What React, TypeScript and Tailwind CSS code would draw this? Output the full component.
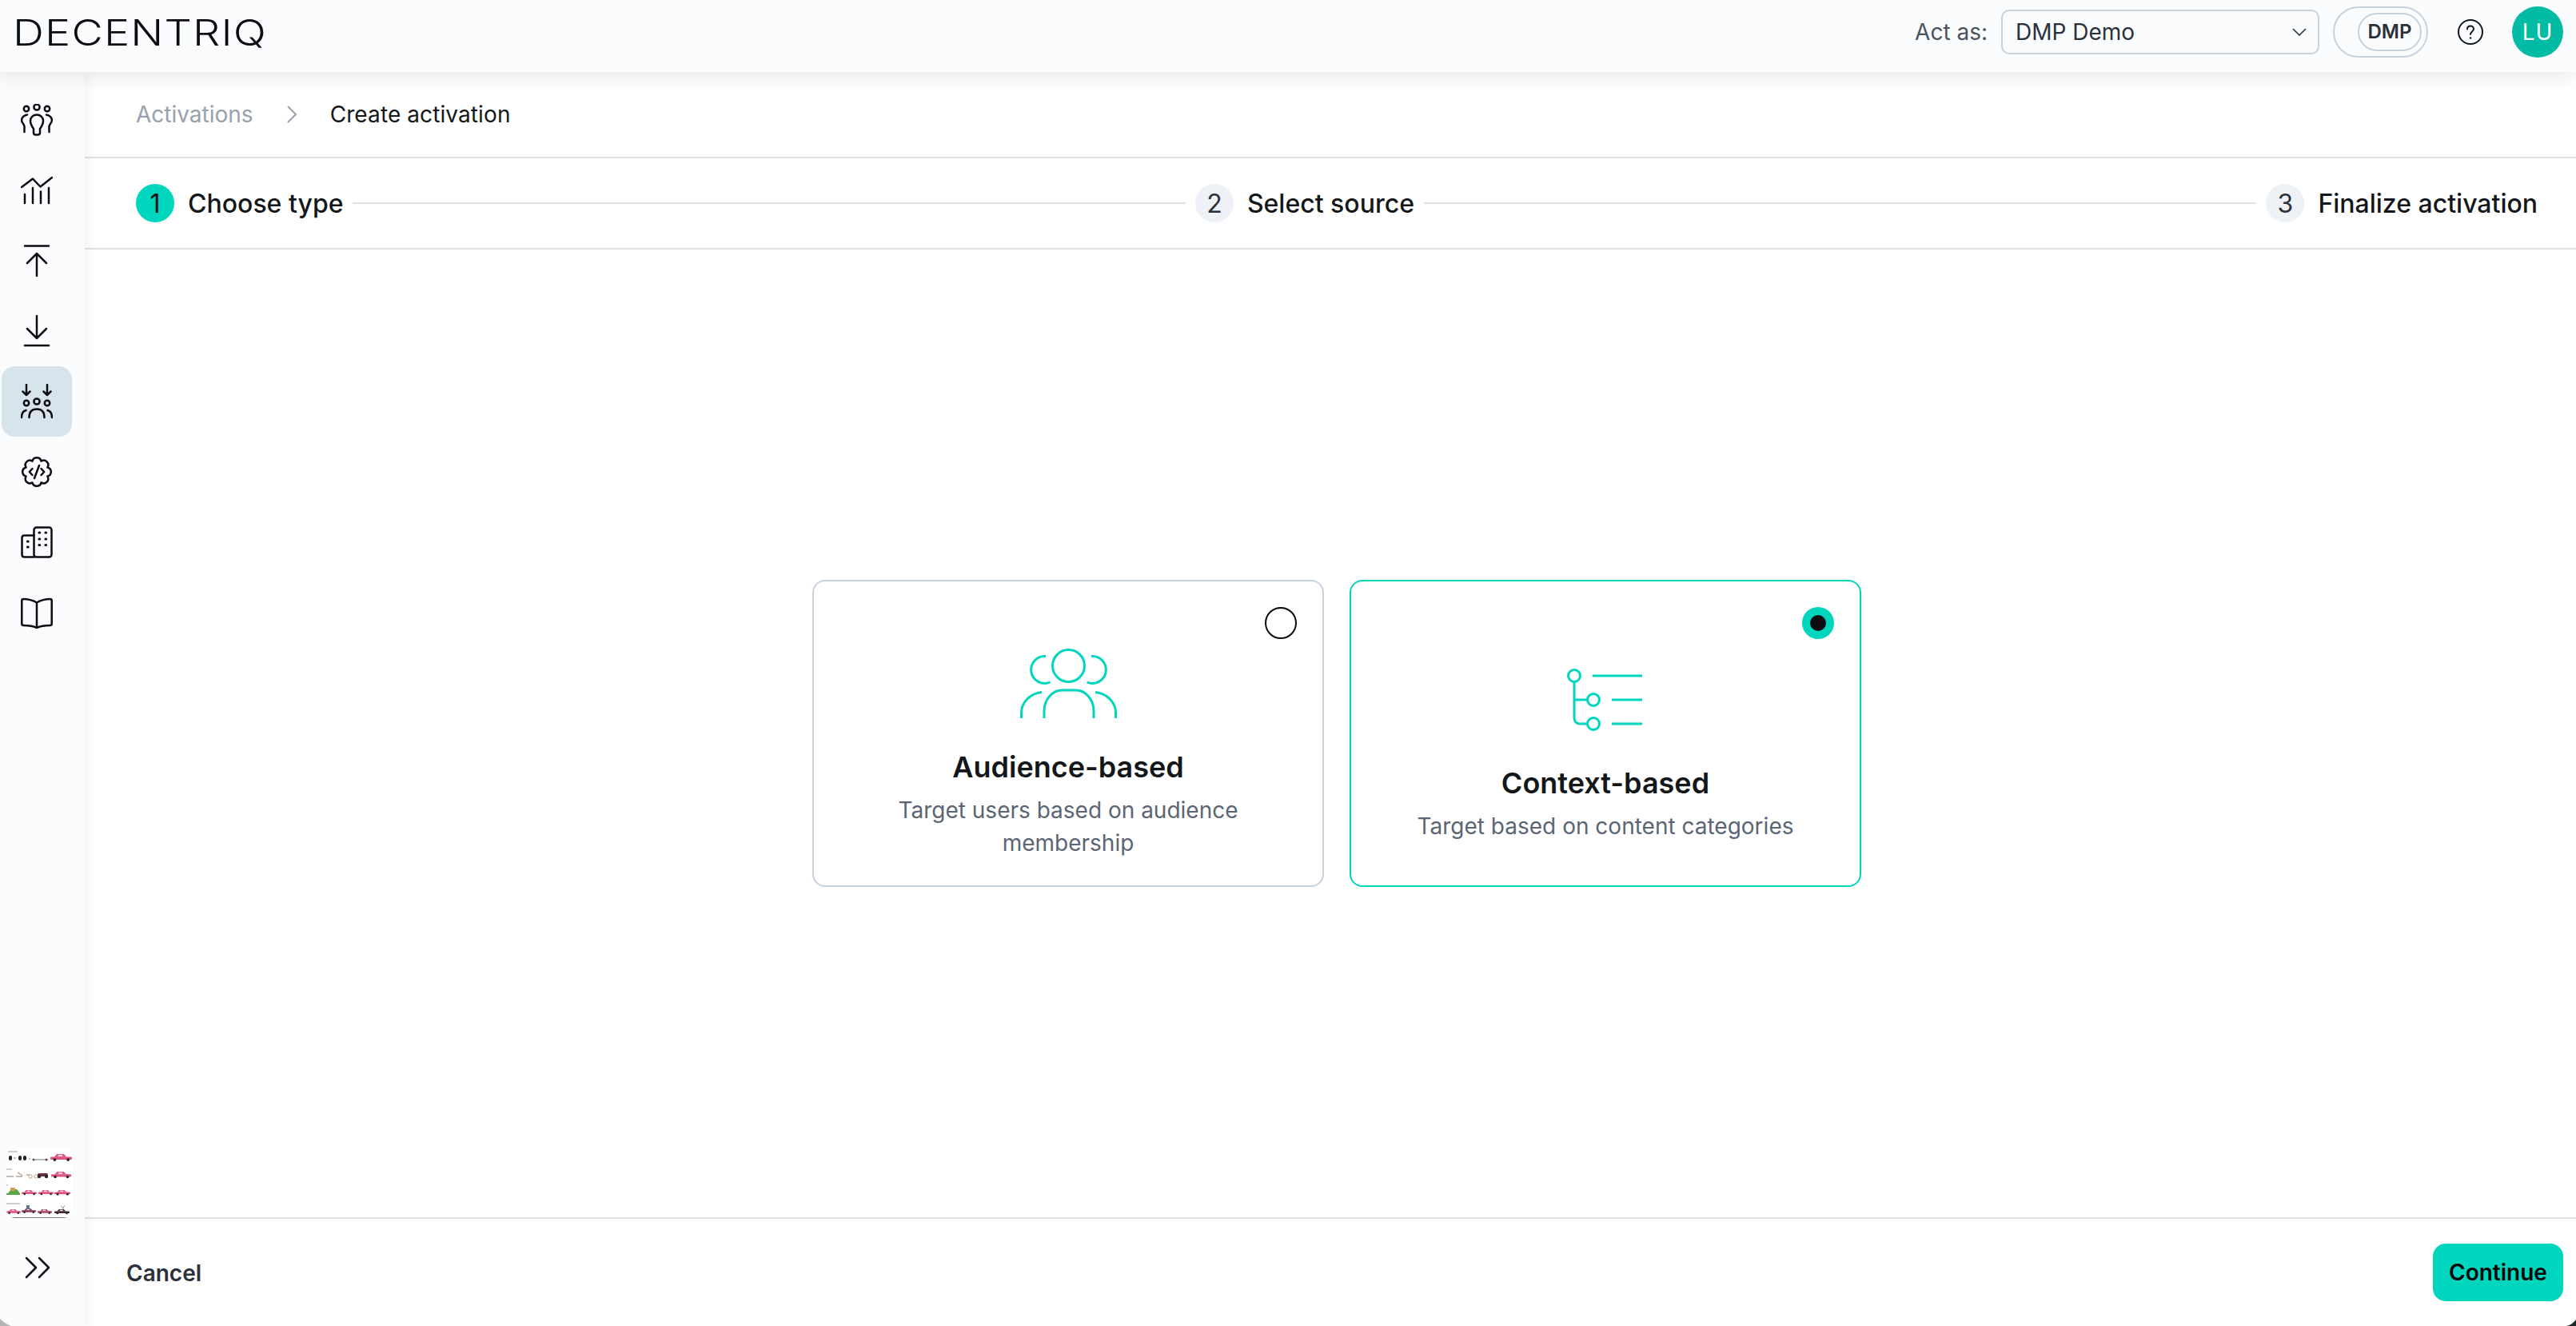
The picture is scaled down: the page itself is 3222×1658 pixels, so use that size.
const teal = '#00d6bd';

function Icon({ children, h = 40 }: { children: React.ReactNode; h?: number }) {
  return (
    <svg width="40" height={h} viewBox={`0 0 40 ${h}`} fill="none" stroke="#0b0d10" strokeWidth="2.5" strokeLinecap="round" strokeLinejoin="round">
      {children}
    </svg>
  );
}

const navIcons = [
  <Icon key="users">
    <circle cx="7" cy="6" r="3.2" />
    <circle cx="20" cy="4" r="3.6" />
    <circle cx="33" cy="6" r="3.2" />
    <path d="M16 31C13 27 12 24 12 21C12 16.5 15.5 13.5 20 13.5C24.5 13.5 28 16.5 28 21C28 24 27 27 24 31V36C24 37.5 23 38.5 21.5 38.5H18.5C17 38.5 16 37.5 16 36Z" />
    <path d="M8 13.5C4 14 1 17 1 20.5C1 23 4 25 4.5 28V35" />
    <path d="M32 13.5C36 14 39 17 39 20.5C39 23 36 25 35.5 28V35" />
  </Icon>,
  <Icon key="chart">
    <path d="M1 16L15 5.500L24.500 15.500L39 4" />
    <path d="M5 25V36M15 17V36M25 21.500V36M35 17V36" />
  </Icon>,
  <Icon key="upload">
    <path d="M5 1.500H35M20 11V39M8 23L20 11L32 23" />
  </Icon>,
  <Icon key="download">
    <path d="M20 1V29M8 17L20 29L32 17M5 38H35" />
  </Icon>,
  <Icon key="audiences" h={44}>
    <path d="M7 1V14M2.500 9.500L7 14L11.500 9.500M33 1V14M28.500 9.500L33 14L37.500 9.500" />
    <circle cx="7" cy="24" r="3.200" />
    <circle cx="20" cy="22" r="3.600" />
    <circle cx="33" cy="24" r="3.200" />
    <path d="M10.500 42C10.500 35 14 31.500 20 31.500C26 31.500 29.500 35 29.500 42" />
    <path d="M6.500 33C3 34 1 37 1 42M33.500 33C37 34 39 37 39 42" />
  </Icon>,
  <Icon key="code">
    <path d="M33.400 14.450A5.700 5.700 0 0 1 33.400 25.550A5.700 5.700 0 0 1 25.550 33.400A5.700 5.700 0 0 1 14.450 33.400A5.700 5.700 0 0 1 6.600 25.550A5.700 5.700 0 0 1 6.600 14.450A5.700 5.700 0 0 1 14.450 6.600A5.700 5.700 0 0 1 25.550 6.600A5.700 5.700 0 0 1 33.400 14.450Z" />
    <path d="M14.500 16L10.800 20L14.500 24M25.500 16L29.200 20L25.500 24M23 12L17 28" />
  </Icon>,
  <Icon key="buildings">
    <rect x="16.500" y="1.500" width="22" height="37" rx="3" />
    <path d="M16.500 11.500H4.500C2.500 11.500 1.500 12.500 1.500 14.500V35.500C1.500 37.500 2.500 38.500 4.500 38.500H16.500" />
    <path d="M23 8H23.600M31 8H31.600M23 16H23.600M31 16H31.600M23 23.500H23.600M31 23.500H31.600M8.500 19H9.100M8.500 26H9.100" strokeWidth="3.200" />
  </Icon>,
  <Icon key="book">
    <path d="M20 7.500C16 4.500 8 3 3.500 3C2 3 1.300 4 1.300 5V34C1.300 35 2 36 3.500 36C9 36 16 37 20 39C24 37 31 36 36.500 36C38 36 38.700 35 38.700 34V5C38.700 4 38 3 36.500 3C32 3 24 4.500 20 7.500ZM20 7.500V39" />
  </Icon>,
];

// x, y = top-left of the car in the thumbnail, w = car width
function Car({ x, y, w = 20, body = '#e0527f' }: { x: number; y: number; w?: number; body?: string }) {
  const h = w * 0.32;
  return (
    <g>
      <path d={`M${x + w * 0.18} ${y + h * 0.42}L${x + w * 0.3} ${y}H${x + w * 0.62}L${x + w * 0.76} ${y + h * 0.42}Z`} fill={body} />
      <rect x={x + w * 0.36} y={y + h * 0.1} width={w * 0.2} height={h * 0.26} fill="#f3d9e2" />
      <rect x={x} y={y + h * 0.4} width={w} height={h * 0.42} rx="1" fill={body} />
      <circle cx={x + w * 0.2} cy={y + h * 0.82} r={h * 0.22} fill="#26222a" />
      <circle cx={x + w * 0.82} cy={y + h * 0.82} r={h * 0.22} fill="#26222a" />
    </g>
  );
}

function Thumbnail() {
  return (
    <svg width="82" height="87" viewBox="0 0 82 87" className="rounded-[10px] bg-white">
      <path d="M0 4H14M0 26H7M0 46H2M0 69H17" stroke="#77777a" strokeWidth="1" opacity="0.7" />
      <rect x="3" y="9" width="4" height="6" rx="2" fill="#222" />
      <rect x="15" y="9" width="4" height="6" rx="2" fill="#222" />
      <rect x="21" y="9" width="4" height="6" rx="2" fill="#222" />
      <path d="M9 12H12M28 13H30M33 14H52" stroke="#777" strokeWidth="1" />
      <circle cx="34" cy="14" r="1.500" fill="#555" />
      <circle cx="50" cy="14" r="1.500" fill="#555" />
      <Car x={55} y={7} w={27} />
      <path d="M0 35H9M12 35H20M14 30L20 34M25 33H29" stroke="#8a7a6a" strokeWidth="1" />
      <circle cx="30" cy="35" r="2.200" fill="none" stroke="#b69365" strokeWidth="0.800" />
      <circle cx="37" cy="35" r="2.200" fill="none" stroke="#b69365" strokeWidth="0.800" />
      <rect x="39" y="31" width="13" height="4" rx="2" fill="#6b2f3f" />
      <circle cx="41" cy="35" r="2.200" fill="#2a2528" />
      <circle cx="50" cy="35" r="2.200" fill="#2a2528" />
      <Car x={56} y={29} w={25} />
      <path d="M2 56L6 51H13L17 56V58H0V56Z" fill="#58a645" />
      <rect x="5" y="49" width="6" height="4" fill="#c9a647" />
      <Car x={19} y={52} w={19} />
      <Car x={40} y={52} w={19} />
      <Car x={60} y={52} w={20} />
      <Car x={0} y={76} w={18} />
      <Car x={19} y={75} w={18} body="#8a3d58" />
      <rect x="25" y="71" width="4" height="5" fill="#5b7a8f" />
      <Car x={39} y={76} w={18} body="#a8486a" />
      <Car x={60} y={76} w={19} body="#3d2a31" />
      <path d="M68 72L72 75M73 71L70 76" stroke="#888" strokeWidth="0.800" />
      <path d="M0 86.500H76" stroke="#777" strokeWidth="1" />
    </svg>
  );
}

function Step({ n, label, active }: { n: number; label: string; active?: boolean }) {
  return (
    <div className="flex items-center shrink-0 gap-[17px]">
      <div className={`w-[48px] h-[48px] pt-[2px] rounded-full flex items-center justify-center text-[32px] ${active ? 'bg-[#00d6bd] text-[#0b0d10]' : 'bg-[#eef2f6] text-[#2a313a]'}`}>{n}</div>
      <span className="text-[32px] font-[450] text-[#14171a] leading-none mt-[2px]">{label}</span>
    </div>
  );
}

function Card({ title, desc, selected, icon }: { title: string; desc: string; selected?: boolean; icon: React.ReactNode }) {
  return (
    <div className={`relative w-[640px] h-[384px] rounded-[16px] border-2 flex flex-col items-center justify-center text-center px-[64px] ${selected ? 'border-[#00d6bd]' : 'border-[#c6d3df]'}`}>
      {selected ? (
        <div className="absolute top-[32px] right-[32px] w-[40px] h-[40px] rounded-full bg-[#00d6bd] flex items-center justify-center">
          <div className="w-[20px] h-[20px] rounded-full bg-[#0b0d10]" />
        </div>
      ) : (
        <div className="absolute top-[32px] right-[32px] w-[40px] h-[40px] rounded-full border-2 border-[#0b0d10]" />
      )}
      <div className="h-[172px] flex items-center justify-center pt-[18px]">{icon}</div>
      <div className="text-[36px] font-semibold leading-[54px] text-[#14171a]">{title}</div>
      <div className="mt-[7px] text-[28px] leading-[41px] text-[#5b6573]">{desc}</div>
    </div>
  );
}

export default function App() {
  return (
    <div className="w-[3222px] h-[1658px] relative overflow-hidden bg-white flex flex-col font-['Inter',sans-serif]">
      <header className="h-[90px] shrink-0 bg-[#fbfcfe] flex items-center pl-[16px] pr-[16px] pb-[10px] relative z-20 shadow-[0_4px_24px_rgba(0,0,0,0.1)]">
        <div className="text-[45px] font-light tracking-[1px] text-[#0b0d10] leading-none origin-left scale-x-[1.2]">DECENTRIQ</div>
        <div className="ml-auto flex items-center">
          <span className="text-[28px] text-[#4a535e] mr-[17px]">Act as:</span>
          <div className="w-[398px] h-[56px] rounded-[10px] border-2 border-[#c6d3df] flex items-center pl-[16px] pr-[14px] text-[28px] text-[#2a313a]">
            <span>DMP Demo</span>
            <svg className="ml-auto" width="18" height="10" viewBox="0 0 18 10" fill="none" stroke="#2a313a" strokeWidth="1.600"><path d="M1 1L9 9L17 1" /></svg>
          </div>
          <div className="ml-[17px] w-[119px] h-[64px] rounded-full border-2 border-[#c6d3df] flex items-center justify-end pr-[6px]">
            <div className="w-[80px] h-[48px] rounded-full border-2 border-[#c6d3df] flex items-center justify-center text-[24px] font-semibold text-[#2a313a]">DMP</div>
          </div>
          <svg className="ml-[37px]" width="32" height="32" viewBox="0 0 32 32" fill="none" stroke="#14171a" strokeWidth="2" strokeLinecap="round">
            <circle cx="16" cy="16" r="15" />
            <path d="M12 12.500C12 10 13.800 8.500 16 8.500C18.200 8.500 20 10 20 12.300C20 15.500 16 15.500 16 19" />
            <path d="M16 23.500V23.600" strokeWidth="2.500" />
          </svg>
          <div className="ml-[36px] w-[64px] h-[64px] rounded-full bg-[#02bba5] flex items-center justify-center text-white text-[28px] tracking-[1px]">LU</div>
        </div>
      </header>
      <div className="flex-1 flex min-h-0">
        <aside className="w-[106px] shrink-0 bg-[#fbfcfe] flex flex-col pl-[2px] pt-[16px] pb-[43px] shadow-[4px_0_12px_rgba(0,0,0,0.05)] relative z-10">
          {navIcons.map((icon, i) => (
            <div key={i} className={`w-[88px] h-[88px] rounded-[16px] flex items-center justify-center ${i === 4 ? 'bg-[#d8e4eb]' : ''}`}>{icon}</div>
          ))}
          <div className="mt-auto ml-[6px] h-[87px]"><Thumbnail /></div>
          <div className="h-[60px] mt-[32px] w-[90px] flex items-center justify-center">
            <svg width="32" height="28" viewBox="0 0 32 28" fill="none" stroke="#0b0d10" strokeWidth="2.500" strokeLinecap="round" strokeLinejoin="round"><path d="M2 2L14 14L2 26M18 2L30 14L18 26" /></svg>
          </div>
        </aside>
        <main className="flex-1 min-w-0 flex flex-col">
          <div className="h-[108px] shrink-0 border-b-2 border-[#e0e1e2] flex items-center pl-[64px] text-[28px]">
            <span className="text-[#98a1ac]">Activations</span>
            <svg className="mx-[41px]" width="14" height="22" viewBox="0 0 14 22" fill="none" stroke="#98a1ac" strokeWidth="2"><path d="M2 1L12 11L2 21" /></svg>
            <span className="text-[#14171a] tracking-[0.1px]">Create activation</span>
          </div>
          <div className="h-[114px] shrink-0 border-b-2 border-[#e0e1e2] flex items-center pl-[64px] pr-[48px] gap-[12px]">
            <Step n={1} label="Choose type" active />
            <div className="flex-1 h-[2px] bg-[#e0e1e2]" />
            <Step n={2} label="Select source" />
            <div className="flex-1 h-[2px] bg-[#e0e1e2]" />
            <Step n={3} label="Finalize activation" />
          </div>
          <div className="flex-1 flex items-center justify-center gap-[32px] pl-[16px]">
            <Card
              title="Audience-based"
              desc="Target users based on audience membership"
              icon={
                <svg width="121" height="88" viewBox="0 0 121 88" fill="none" stroke={teal} strokeWidth="3">
                  <circle cx="60.500" cy="21.500" r="20" />
                  <path d="M32 9.500A17 17 0 1 0 37.500 42M89 9.500A17 17 0 1 1 83.500 42" />
                  <path d="M30 87V78C30 62 42 52 52 52H70C80 52 92 62 92 78V87" />
                  <path d="M27 54.500C12 56 1.500 68 1.500 80V87M94 54.500C109 56 119.500 68 119.500 80V87" />
                </svg>
              }
            />
            <Card
              title="Context-based"
              selected
              desc="Target based on content categories"
              icon={
                <svg width="96" height="80" viewBox="0 0 96 80" fill="none" stroke={teal} strokeWidth="3">
                  <circle cx="9" cy="10" r="7.500" />
                  <circle cx="33" cy="40" r="7.500" />
                  <circle cx="33" cy="70" r="7.500" />
                  <path d="M9 17.500V62C9 67 12 70 16 70H25.500M9 40H25.500" />
                  <path d="M32 10H94M56 40H94M56 70H94" />
                </svg>
              }
            />
          </div>
          <div className="h-[136px] shrink-0 border-t-2 border-[#e0e1e2] flex items-center justify-between pl-[52px] pr-[16px]">
            <span className="text-[28px] font-semibold text-[#2a313a] mt-[1px]">Cancel</span>
            <button className="h-[72px] w-[163px] rounded-[16px] bg-[#00d6bd] text-[28px] font-semibold text-[#050607]">Continue</button>
          </div>
        </main>
      </div>
      {/* window corners showing through the capture */}
      <svg className="absolute left-0 bottom-0 z-30" width="14" height="9" viewBox="0 0 14 9"><path d="M0 0C4 4 8 7 14 9H0Z" fill="#b5b5b5" /></svg>
      <svg className="absolute right-0 bottom-0 z-30" width="12" height="8" viewBox="0 0 12 8"><path d="M12 0C9 4 5 7 0 8H12Z" fill="#1f2627" /></svg>
    </div>
  );
}
